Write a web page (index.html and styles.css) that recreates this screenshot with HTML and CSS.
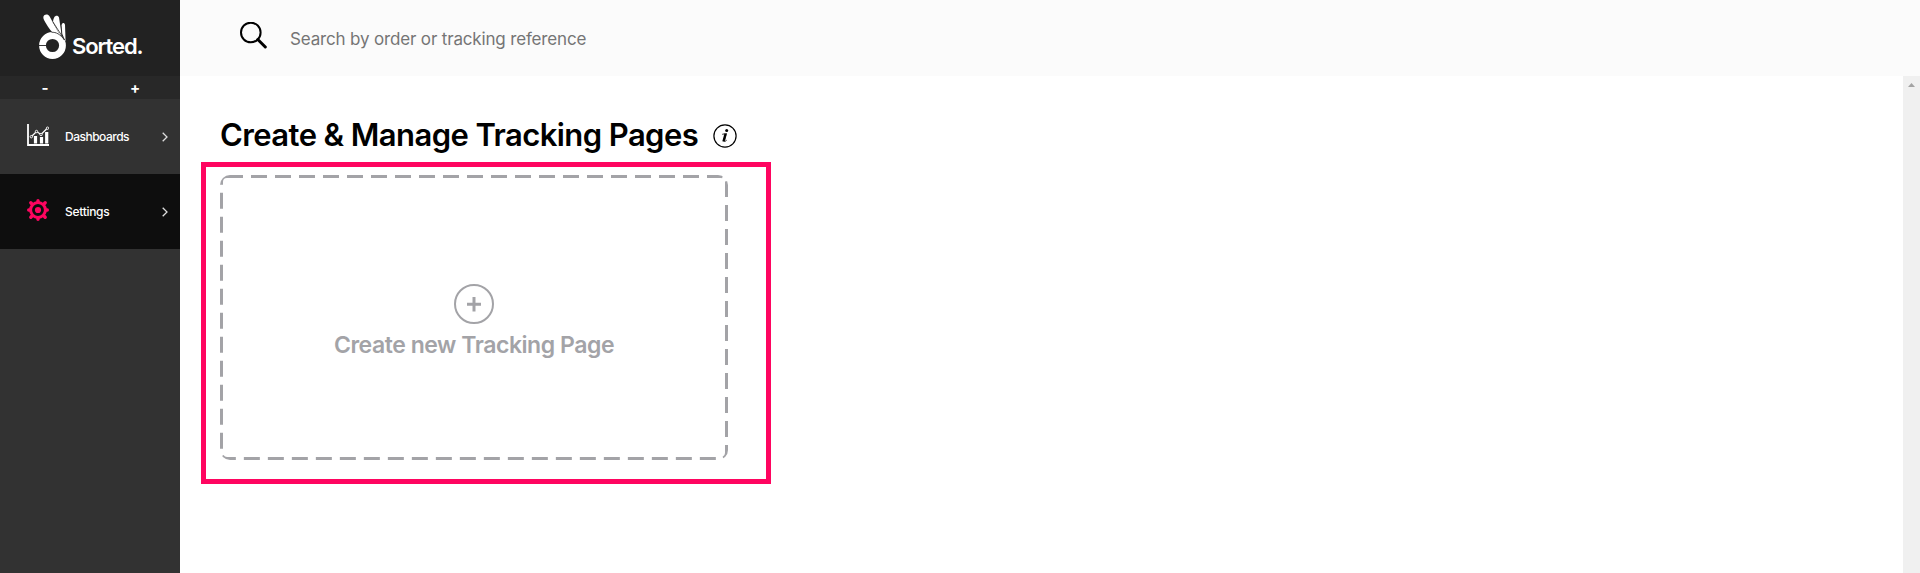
FILE: index.html
```html
<!DOCTYPE html>
<html lang="en">
<head>
<meta charset="utf-8">
<title>Create &amp; Manage Tracking Pages</title>
<link rel="stylesheet" href="styles.css">
</head>
<body>
<div class="app">
  <aside class="sidebar">
    <div class="brand">
      <svg class="brand-mark" width="28" height="46" viewBox="0 0 28 46">
        <g fill="#fff">
          <path d="M5.2 1.2C7-.2 9.400 .3 10.500 2.200L20.500 20.500 19 19.800C17 18.500 15 18 13.200 18 11.800 17.200 5.500 7.500 4.600 5 4.200 3.500 4.200 2.100 5.200 1.200Z"/>
          <path d="M15.300 3.200C16.500 1 19.300 1.200 20 3.600L22 16.500 22.600 24.500 14.300 8.500C13.800 6.500 14.500 4.600 15.300 3.200Z"/>
          <path d="M22.600 11.500C22.800 8.500 25.500 8.300 26 11L26.600 27.500 23.300 20Z"/>
        </g>
        <circle cx="13.500" cy="31.500" r="10" fill="none" stroke="#fff" stroke-width="6.800"/>
        <path d="M0 31.500H7" stroke="#222" stroke-width=".9"/>
        <path d="M12.500 18.300C17 18 21 20 25.500 26M14 8L25.500 26" fill="none" stroke="#222" stroke-width=".8"/>
      </svg>
      <span class="brand-name">Sorted.</span>
    </div>
    <div class="resizer"><span>-</span><span>+</span></div>
    <nav>
      <a class="item">
        <svg class="item-icon" width="22" height="22" viewBox="0 0 22 22" fill="none" stroke="#fff">
          <path d="M1 0V21H22" stroke-width="1.800"/>
          <path d="M8.500 12V19.500M14.500 13V19.500M19.700 8V19.500" stroke-width="3.200"/>
          <path d="M4 13L9.500 7.500 14 10.500 20.500 4" stroke-width="1.300"/>
          <g fill="#323232" stroke-width=".9"><circle cx="4.300" cy="12.700" r="1.200"/><circle cx="9.500" cy="7.500" r="1.200"/><circle cx="14" cy="10.500" r="1.200"/><circle cx="20.500" cy="4.200" r="1.200"/></g>
        </svg>
        <span class="item-label">Dashboards</span>
        <svg class="chevron" width="6" height="10" viewBox="0 0 6 10"><path d="M.7 .7L5 5 .7 9.300"/></svg>
      </a>
      <a class="item active">
        <svg class="item-icon" width="22" height="22" viewBox="-11 -11 22 22">
          <g fill="none" stroke="#ff0560">
            <circle r="7.400" stroke-width="3"/>
            <path d="M0-8V-9.300M0 8V9.300M-8 0H-9.300M8 0H9.300M6-6L7.200-7.200M-6-6L-7.200-7.200M6 6L7.200 7.200M-6 6L-7.200 7.200" stroke-width="3.400" stroke-linecap="round"/>
          </g>
          <circle r="3.100" fill="#ff0560"/>
        </svg>
        <span class="item-label settings">Settings</span>
        <svg class="chevron" width="6" height="10" viewBox="0 0 6 10"><path d="M.7 .7L5 5 .7 9.300"/></svg>
      </a>
    </nav>
  </aside>
  <div class="main">
    <header class="search">
      <svg width="27" height="27" viewBox="0 0 27 27" fill="none" stroke="#000">
        <circle cx="10.800" cy="10.500" r="9.800" stroke-width="2"/>
        <path d="M17.800 17.500L25.300 25" stroke-width="3" stroke-linecap="round"/>
      </svg>
      <span class="placeholder">Search by order or tracking reference</span>
    </header>
    <div class="body">
      <section class="content">
        <div class="heading">
          <h1>Create &amp; Manage Tracking Pages</h1>
          <svg width="24" height="24" viewBox="0 0 24 24">
            <circle cx="12" cy="12" r="11.100" fill="none" stroke="#000" stroke-width="1.200"/>
            <circle cx="13.700" cy="6.500" r="1.500"/>
            <path d="M9.200 10.300L13.500 9.500 11.400 17.300Q11.500 18.100 13.700 16.200" fill="none" stroke="#000" stroke-width=".8"/>
            <path d="M12.500 9.900L10.400 17.500" fill="none" stroke="#000" stroke-width="2.200"/>
          </svg>
        </div>
        <div class="highlight">
          <div class="card">
            <svg class="dashes" width="508" height="285"><rect width="508" height="285" rx="7" fill="none" stroke="#a3a3a7" stroke-width="6" stroke-dasharray="16 8"/></svg>
            <svg width="40" height="40" viewBox="0 0 40 40" fill="none" stroke="#a3a3a7">
              <circle cx="20" cy="20" r="19" stroke-width="2"/>
              <path d="M20 13V27.500M13 20.300H27" stroke-width="3"/>
            </svg>
            <span class="card-label">Create new Tracking Page</span>
          </div>
        </div>
      </section>
      <div class="scrollbar"><svg width="7" height="4" viewBox="0 0 7 4"><path d="M0 4L3.500 0 7 4Z" fill="#a3a3a3"/></svg></div>
    </div>
  </div>
</div>
</body>
</html>
```
FILE: styles.css
```css
* { box-sizing: border-box; }
body { margin: 0; background: #fff; font-family: Inter, "Liberation Sans", sans-serif; overflow: hidden; }
svg { display: block; flex: none; }
span, h1 { white-space: nowrap; }
.app { display: flex; height: 573px; }
.sidebar { width: 180px; flex: none; background: #323232; color: #fff; }
.brand { height: 76px; padding: 14px 0 0 39px; display: flex; gap: 5px; background: #222; }
.brand-name { font-size: 22px; line-height: 26px; font-weight: 600; letter-spacing: -1.1px; margin-top: 19px; }
.resizer { height: 23px; display: flex; background: #282828; font-size: 15px; line-height: 23px; font-weight: 700; }
.resizer span { flex: 1; text-align: center; }
.item { height: 75px; padding: 0 12px 0 27px; display: flex; align-items: center; }
.active { background: #0e0e0e; }
.item-icon { margin-bottom: 3px; }
.item-label { flex: 1; margin-left: 16px; font-size: 12px; line-height: 16px; font-weight: 500; letter-spacing: -0.5px; }
.settings { letter-spacing: -0.3px; }
.chevron { fill: none; stroke: #ddd; stroke-width: 1.3; }
.main { flex: 1; display: flex; flex-direction: column; }
.search { height: 76px; padding: 22px 0 0 60px; display: flex; background: #fbfbfb; }
.placeholder { margin: 5px 0 0 23px; font-size: 17px; line-height: 24px; letter-spacing: -0.16px; color: #757575; }
.body { flex: 1; display: flex; }
.content { flex: 1; padding: 40px 0 0 21px; }
.heading { height: 46px; padding-left: 19px; display: flex; gap: 15px; }
h1 { margin: 0; font-size: 31px; line-height: 38px; font-weight: 600; letter-spacing: -0.58px; color: #000; }
.heading svg { margin-top: 8px; }
.highlight { width: 570px; height: 322px; border: 5px solid #ff0560; padding: 8px 0 0 14px; }
.card { position: relative; width: 508px; height: 285px; border-radius: 10px; overflow: hidden; padding-top: 109px; display: flex; flex-direction: column; align-items: center; }
.dashes { position: absolute; inset: 0; }
.card-label { margin-top: 5px; font-size: 23px; line-height: 32px; font-weight: 600; letter-spacing: -0.45px; color: #a3a3a7; }
.scrollbar { width: 17px; background: #f0f0f0; padding: 7px 0 0 5px; }
```
